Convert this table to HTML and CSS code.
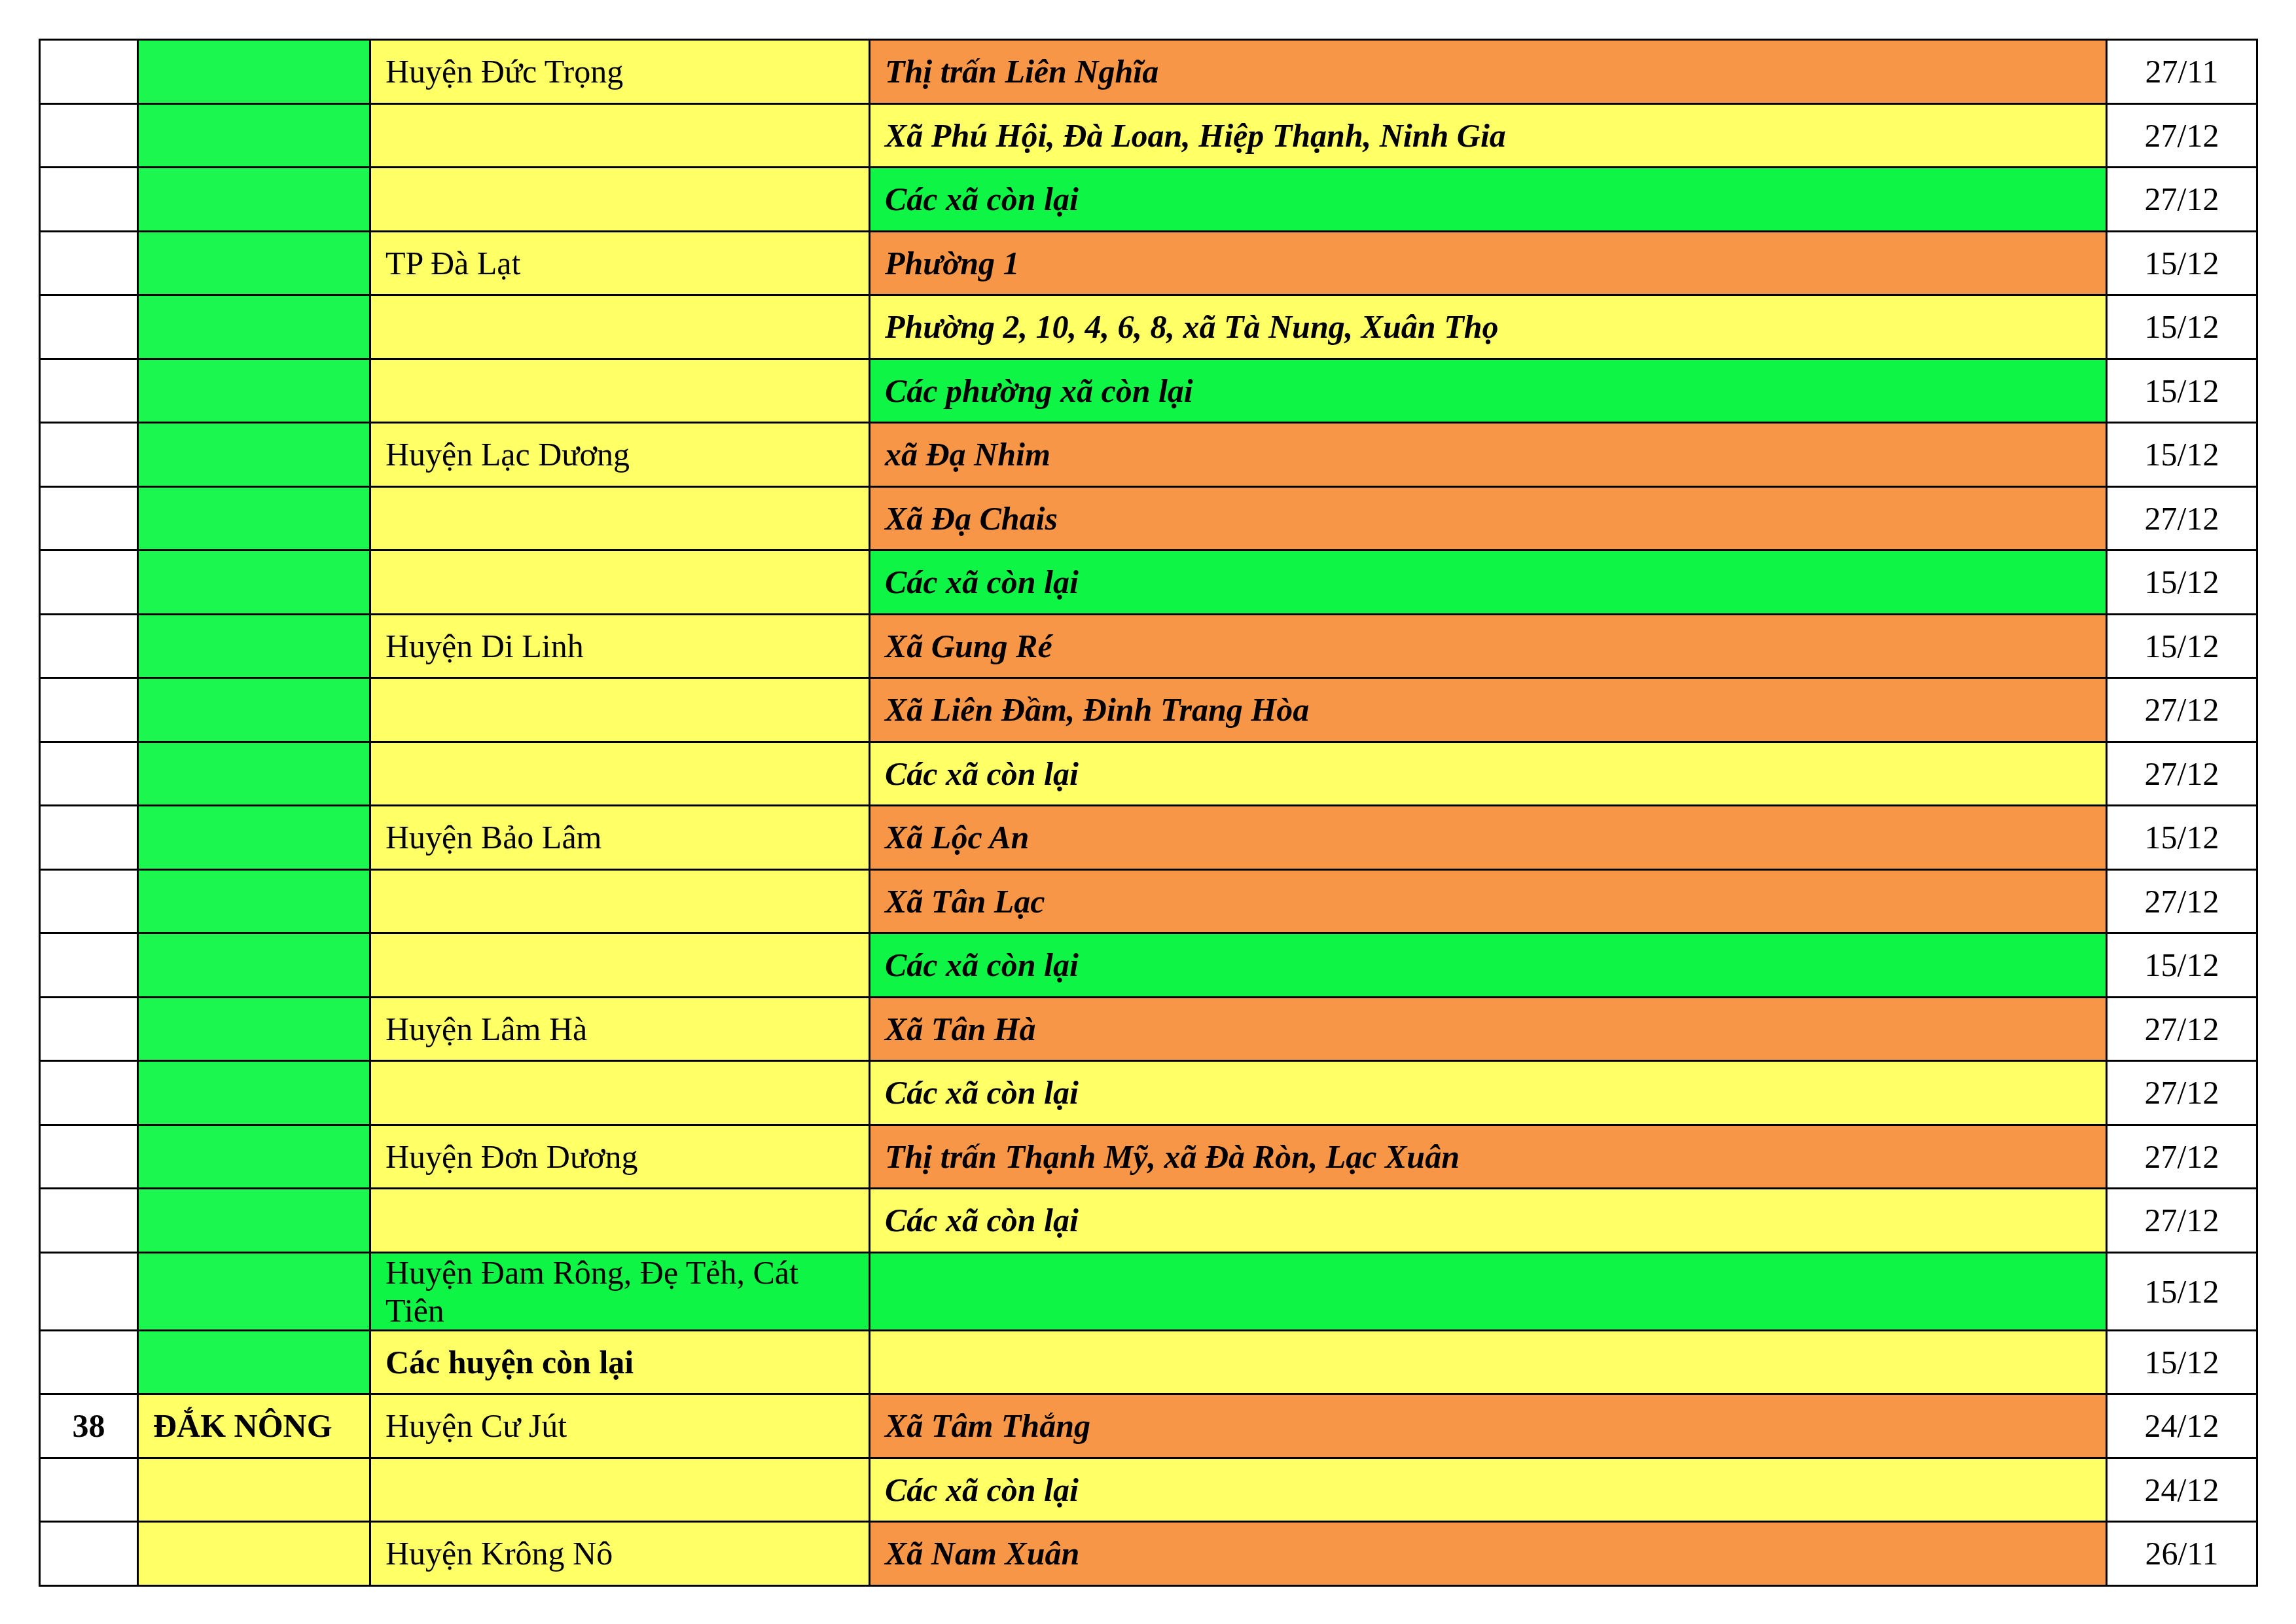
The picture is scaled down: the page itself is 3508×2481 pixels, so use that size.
FILE: index.html
```html
<!DOCTYPE html>
<html lang="vi">
<head>
<meta charset="utf-8">
<title>Lịch</title>
<link rel="stylesheet" href="styles.css">
</head>
<body>
<table class="sheet">
  <colgroup>
    <col class="c-stt">
    <col class="c-tinh">
    <col class="c-huyen">
    <col class="c-xa">
    <col class="c-ngay">
  </colgroup>
  <tbody>
    <tr><td></td><td class="g1"></td><td class="y">Huyện Đức Trọng</td><td class="xa o">Thị trấn Liên Nghĩa</td><td class="d">27/11</td></tr>
    <tr><td></td><td class="g1"></td><td class="y"></td><td class="xa y">Xã Phú Hội, Đà Loan, Hiệp Thạnh, Ninh Gia</td><td class="d">27/12</td></tr>
    <tr><td></td><td class="g1"></td><td class="y"></td><td class="xa g2">Các xã còn lại</td><td class="d">27/12</td></tr>
    <tr><td></td><td class="g1"></td><td class="y">TP Đà Lạt</td><td class="xa o">Phường 1</td><td class="d">15/12</td></tr>
    <tr><td></td><td class="g1"></td><td class="y"></td><td class="xa y">Phường 2, 10, 4, 6, 8, xã Tà Nung, Xuân Thọ</td><td class="d">15/12</td></tr>
    <tr><td></td><td class="g1"></td><td class="y"></td><td class="xa g2">Các phường xã còn lại</td><td class="d">15/12</td></tr>
    <tr><td></td><td class="g1"></td><td class="y">Huyện Lạc Dương</td><td class="xa o">xã Đạ Nhim</td><td class="d">15/12</td></tr>
    <tr><td></td><td class="g1"></td><td class="y"></td><td class="xa o">Xã Đạ Chais</td><td class="d">27/12</td></tr>
    <tr><td></td><td class="g1"></td><td class="y"></td><td class="xa g2">Các xã còn lại</td><td class="d">15/12</td></tr>
    <tr><td></td><td class="g1"></td><td class="y">Huyện Di Linh</td><td class="xa o">Xã Gung Ré</td><td class="d">15/12</td></tr>
    <tr><td></td><td class="g1"></td><td class="y"></td><td class="xa o">Xã Liên Đầm, Đinh Trang Hòa</td><td class="d">27/12</td></tr>
    <tr><td></td><td class="g1"></td><td class="y"></td><td class="xa y">Các xã còn lại</td><td class="d">27/12</td></tr>
    <tr><td></td><td class="g1"></td><td class="y">Huyện Bảo Lâm</td><td class="xa o">Xã Lộc An</td><td class="d">15/12</td></tr>
    <tr><td></td><td class="g1"></td><td class="y"></td><td class="xa o">Xã Tân Lạc</td><td class="d">27/12</td></tr>
    <tr><td></td><td class="g1"></td><td class="y"></td><td class="xa g2">Các xã còn lại</td><td class="d">15/12</td></tr>
    <tr><td></td><td class="g1"></td><td class="y">Huyện Lâm Hà</td><td class="xa o">Xã Tân Hà</td><td class="d">27/12</td></tr>
    <tr><td></td><td class="g1"></td><td class="y"></td><td class="xa y">Các xã còn lại</td><td class="d">27/12</td></tr>
    <tr><td></td><td class="g1"></td><td class="y">Huyện Đơn Dương</td><td class="xa o">Thị trấn Thạnh Mỹ, xã Đà Ròn, Lạc Xuân</td><td class="d">27/12</td></tr>
    <tr><td></td><td class="g1"></td><td class="y"></td><td class="xa y">Các xã còn lại</td><td class="d">27/12</td></tr>
    <tr><td></td><td class="g1"></td><td class="g2">Huyện Đam Rông, Đẹ Tẻh, Cát Tiên</td><td class="xa g2"></td><td class="d">15/12</td></tr>
    <tr><td></td><td class="g1"></td><td class="y b">Các huyện còn lại</td><td class="xa y"></td><td class="d">15/12</td></tr>
    <tr><td class="stt">38</td><td class="y b">ĐẮK NÔNG</td><td class="y">Huyện Cư Jút</td><td class="xa o">Xã Tâm Thắng</td><td class="d">24/12</td></tr>
    <tr><td></td><td class="y"></td><td class="y"></td><td class="xa y">Các xã còn lại</td><td class="d">24/12</td></tr>
    <tr><td></td><td class="y"></td><td class="y">Huyện Krông Nô</td><td class="xa o">Xã Nam Xuân</td><td class="d">26/11</td></tr>
  </tbody>
</table>
</body>
</html>
```
FILE: styles.css
```css
html, body {
  margin: 0;
  padding: 0;
  background: #ffffff;
}

body {
  padding: 59px 0 0 59px;
  font-family: "Liberation Serif", "Times New Roman", serif;
  font-size: 50px;
  color: #000000;
}

.sheet {
  border-collapse: collapse;
  table-layout: fixed;
  width: 3391px;
}

.c-stt { width: 150px; }
.c-tinh { width: 355px; }
.c-huyen { width: 763px; }
.c-xa { width: 1890px; }
.c-ngay { width: 230px; }

.sheet tr {
  height: 97.5px;
}

.sheet td {
  border: 3px solid #000000;
  padding: 0 22px;
  vertical-align: middle;
  line-height: normal;
  white-space: normal;
}

.sheet td.xa {
  font-weight: bold;
  font-style: italic;
}

.sheet td.d {
  text-align: center;
  padding: 0;
}

.sheet td.stt {
  text-align: center;
  font-weight: bold;
  padding: 0;
}

.b { font-weight: bold; }

.g1 { background: #1cf74f; }
.g2 { background: #0ff546; }
.y { background: #ffff66; }
.o { background: #f79646; }
```
